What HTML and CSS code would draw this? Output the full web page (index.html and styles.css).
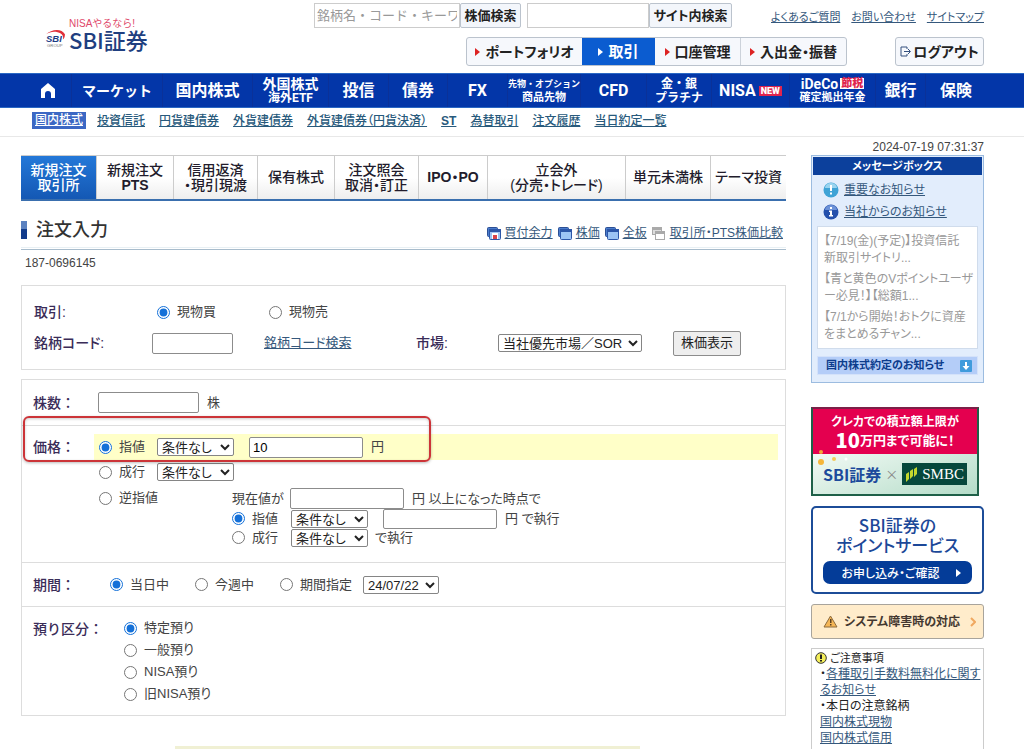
FILE: index.html
```html
<!DOCTYPE html>
<html lang="ja">
<head>
<meta charset="utf-8">
<title>注文入力 | SBI証券</title>
<link rel="stylesheet" href="styles.css">
</head>
<body>
<svg class="defs" aria-hidden="true">
  <symbol id="window" viewBox="0 0 14 13">
    <rect x="0.5" y="0.5" width="10" height="9" rx="1" fill="#4a7ccc" stroke="#2c4f94"/>
    <rect x="2.5" y="2.5" width="11" height="10" rx="1" fill="#9cc4f4" stroke="#2c56a8"/>
    <rect x="2" y="2" width="12" height="3" fill="#2c56a8"/>
  </symbol>
</svg>
<header class="header">
  <a class="logo" href="#">
    <svg class="emblem" viewBox="0 0 20 18" aria-hidden="true">
      <path d="M1 5C6 0 16-1 19 5c0 3-1 4-2 5 1-4-1-6-5-7C8 2 4 3 1 5z" fill="#e0303a"/>
      <text class="emblem-name" x="1" y="12">SBI</text>
      <text class="emblem-group" x="2" y="17">GROUP</text>
    </svg>
    <span class="logo-text"><span class="logo-tag">NISAやるなら!</span><span class="logo-name">SBI証券</span></span>
  </a>
  <div class="tools">
    <div class="tool-row">
      <form class="search"><input class="search-code" type="text" placeholder="銘柄名・コード・キーワード" aria-label="銘柄名・コード・キーワード"><button class="btn" type="button">株価検索</button></form>
      <form class="search"><input class="search-site" type="text" aria-label="サイト内検索"><button class="btn btn-wide" type="button">サイト内検索</button></form>
      <div class="help"><a href="#">よくあるご質問</a><a href="#">お問い合わせ</a><a href="#">サイトマップ</a></div>
    </div>
    <div class="tool-row">
      <div class="menu">
        <a class="menu-item menu-portfolio" href="#"><i class="tri"></i>ポートフォリオ</a>
        <a class="menu-item menu-trade" href="#"><i class="tri"></i>取引</a>
        <a class="menu-item menu-account" href="#"><i class="tri"></i>口座管理</a>
        <a class="menu-item menu-cash" href="#"><i class="tri"></i>入出金・振替</a>
      </div>
      <button class="logout" type="button">
        <svg width="11" height="11" viewBox="0 0 11 11" fill="none" stroke="#34507e" aria-hidden="true"><path d="M7 3V1H1v9h6V8M4 5.500h6M8 3l2.500 2.500L8 8"/></svg>ログアウト
      </button>
    </div>
  </div>
</header>
<nav class="nav">
  <a href="#" aria-label="ホーム"><svg width="16" height="15" viewBox="0 0 16 15" aria-hidden="true"><path d="M8 0l7 6v9h-4v-4a3 3 0 0 0-6 0v4H1V6z" fill="#fff"/></svg></a>
  <a class="mid" href="#">マーケット</a>
  <a href="#">国内株式</a>
  <a class="two" href="#"><span class="mid">外国株式</span><span>海外ETF</span></a>
  <a href="#">投信</a>
  <a href="#">債券</a>
  <a href="#">FX</a>
  <a class="two small" href="#"><span class="options">先物・オプション</span><span>商品先物</span></a>
  <a href="#">CFD</a>
  <a class="two" href="#"><span>金・銀</span><span>プラチナ</span></a>
  <a class="nisa" href="#">NISA<b class="new">NEW</b></a>
  <a class="two small" href="#"><span class="ideco">iDeCo<b class="tax">節税</b></span><span>確定拠出年金</span></a>
  <a href="#">銀行</a>
  <a href="#">保険</a>
</nav>
<nav class="subnav">
  <a class="current" href="#">国内株式</a><a href="#">投資信託</a><a href="#">円貨建債券</a><a href="#">外貨建債券</a><a href="#">外貨建債券（円貨決済）</a><a href="#">ST</a><a href="#">為替取引</a><a href="#">注文履歴</a><a href="#">当日約定一覧</a>
</nav>
<div class="page">
  <main class="main">
    <nav class="tabs">
      <a class="on" href="#">新規注文<br>取引所</a>
      <a href="#"><span>新規注文<br><b>PTS</b></span></a>
      <a href="#">信用返済<br>・現引現渡</a>
      <a href="#">保有株式</a>
      <a href="#">注文照会<br>取消・訂正</a>
      <a href="#">IPO・PO</a>
      <a href="#">立会外<br>(分売・トレード)</a>
      <a href="#">単元未満株</a>
      <a href="#">テーマ投資</a>
    </nav>
    <div class="title">
      <h1>注文入力</h1>
      <div class="title-links">
        <a href="#"><svg width="14" height="13" aria-hidden="true"><use href="#window"/><path d="M5 6h6v6H5z" fill="#fff"/><path d="M6 8h4v4H6z" fill="#d8434a"/></svg><span>買付余力</span></a>
        <a href="#"><svg width="14" height="13" aria-hidden="true"><use href="#window"/></svg><span>株価</span></a>
        <a href="#"><svg width="14" height="13" aria-hidden="true"><use href="#window"/></svg><span>全板</span></a>
        <a href="#"><svg width="14" height="13" viewBox="0 0 14 13" aria-hidden="true"><rect x="0.500" y="0.500" width="9" height="7" fill="#ddd" stroke="#aaa"/><path d="M0 0h10v3H0z" fill="#aaa"/><rect x="3.500" y="4.500" width="9" height="8" fill="#fff" stroke="#aaa"/><path d="M3 4h10v3H3z" fill="#aaa"/></svg><span>取引所・PTS株価比較</span></a>
      </div>
    </div>
    <p class="account">187-0696145</p>
    <form>
      <section class="box trade">
        <span class="label">取引:</span>
        <label class="choice"><input type="radio" name="side" checked>現物買</label>
        <label class="choice choice-sell"><input type="radio" name="side">現物売</label>
        <label class="label line2" for="code">銘柄コード:</label>
        <input class="text code" id="code" type="text">
        <a class="code-link" href="#">銘柄コード検索</a>
        <label class="label" for="market">市場:</label>
        <select id="market" class="market"><option>当社優先市場／SOR</option></select>
        <button class="quote" type="button">株価表示</button>
      </section>
      <section class="box order">
        <div class="row row-qty">
          <label class="label" for="qty">株数：</label>
          <div class="field qty"><input class="text qty-input" id="qty" type="text"><span>株</span></div>
        </div>
        <div class="row row-price">
          <span class="label">価格：</span>
          <div class="prices">
            <div class="price limit"><label class="choice"><input type="radio" name="price" checked>指値</label><select aria-label="指値条件"><option>条件なし</option></select><input class="text amount" type="text" value="10" aria-label="指値価格"><span>円</span></div>
            <div class="price"><label class="choice"><input type="radio" name="price">成行</label><select aria-label="成行条件"><option>条件なし</option></select></div>
            <div class="price stop">
              <label class="choice"><input type="radio" name="price">逆指値</label>
              <div class="stop-body">
                <div class="trigger"><label for="trigger">現在値が</label><input class="text amount" id="trigger" type="text"><span>円 以上になった時点で</span></div>
                <div class="exec"><label class="choice"><input type="radio" name="exec" checked>指値</label><select aria-label="逆指値条件"><option>条件なし</option></select><input class="text amount" type="text" aria-label="執行価格"><span>円 で執行</span></div>
                <div class="exec"><label class="choice"><input type="radio" name="exec">成行</label><select aria-label="逆指値成行条件"><option>条件なし</option></select><span>で執行</span></div>
              </div>
            </div>
          </div>
          <div class="highlight"></div>
        </div>
        <div class="row row-term">
          <span class="label">期間：</span>
          <div class="field terms">
            <label class="choice"><input type="radio" name="term" checked>当日中</label>
            <label class="choice"><input type="radio" name="term">今週中</label>
            <label class="choice"><input type="radio" name="term">期間指定</label>
            <select class="date" aria-label="期間指定日"><option>24/07/22</option></select>
          </div>
        </div>
        <div class="row row-deposit">
          <span class="label">預り区分：</span>
          <div class="deposits">
            <label class="choice"><input type="radio" name="deposit" checked>特定預り</label>
            <label class="choice"><input type="radio" name="deposit">一般預り</label>
            <label class="choice"><input type="radio" name="deposit">NISA預り</label>
            <label class="choice"><input type="radio" name="deposit">旧NISA預り</label>
          </div>
        </div>
      </section>
    </form>
    <div class="confirm"></div>
  </main>
  <aside class="side">
    <time class="clock">2024-07-19 07:31:37</time>
    <section class="messages">
      <h2>メッセージボックス</h2>
      <a class="message" href="#"><svg width="16" height="16" viewBox="0 0 16 16" aria-hidden="true"><circle cx="8" cy="8" r="7.500" fill="#3fa3d6"/><path d="M2 6a6 5 0 0 1 12 0z" fill="#9ad4ef"/><path d="M7 3h2v6H7zM7 10.500h2v2H7z" fill="#fff"/></svg><span>重要なお知らせ</span></a>
      <a class="message" href="#"><svg width="16" height="16" viewBox="0 0 16 16" aria-hidden="true"><circle cx="8" cy="8" r="7.500" fill="#2450ac"/><path d="M2 6a6 5 0 0 1 12 0z" fill="#6c92d8"/><path d="M7 3h2v2H7zM6 6.500h3V11h1v1.500H6V11h1V8H6z" fill="#fff"/></svg><span>当社からのお知らせ</span></a>
      <div class="news">
        <p>【7/19(金)(予定)】投資信託<br>新取引サイトリ...</p>
        <p>【青と黄色のVポイントユーザ<br>ー必見！】【総額1...</p>
        <p>【7/1から開始！おトクに資産<br>をまとめるチャン...</p>
      </div>
      <a class="fills" href="#">国内株式約定のお知らせ<svg width="12" height="12" viewBox="0 0 12 12" aria-hidden="true"><rect width="12" height="12" rx="1" fill="#3f9bdc"/><path d="M5 2h2v4h2.500L6 10 2.500 6H5z" fill="#fff"/></svg></a>
    </section>
    <a class="card" href="#">
      <span class="card-top"><span>クレカでの積立額上限が</span><span class="card-big"><b>10</b>万円まで可能に！</span></span>
      <span class="card-bottom">
        <svg class="coins" width="40" height="16" viewBox="0 0 40 16" aria-hidden="true"><circle cx="8" cy="3" r="2" fill="#f4a938"/><circle cx="8" cy="13" r="3" fill="#f6b63a"/><circle cx="21" cy="10" r="2" fill="#f3ca5a"/><circle cx="33" cy="10" r="1.500" fill="#fff"/></svg>
        <span class="card-sbi">SBI証券</span><span class="times">×</span><span class="smbc"><svg width="13" height="15" viewBox="0 0 13 15" aria-hidden="true"><path d="M1 7l3-2v7l-3 3zM5 4l3-2v7l-3 3zM9 2l3-2v7L9 10z" fill="#c4d82e"/></svg>SMBC</span>
      </span>
    </a>
    <a class="points" href="#"><span>SBI証券の</span><span>ポイントサービス</span><span class="points-btn">お申し込み・ご確認<i class="tri"></i></span></a>
    <a class="outage" href="#"><svg width="15" height="13" viewBox="0 0 15 13" aria-hidden="true"><path d="M7.500 1L14 12H1z" fill="#f5b656" stroke="#8c6a3c" stroke-linejoin="round"/><path d="M7 4h1.500v4H7zM7 9h1.500v1.500H7z" fill="#5a4020"/></svg><span>システム障害時の対応</span><svg width="6" height="10" viewBox="0 0 6 10" fill="none" stroke="#f0a860" stroke-width="2" aria-hidden="true"><path d="M1 1l4 4-4 4"/></svg></a>
    <section class="notice">
      <h2><svg width="12" height="12" viewBox="0 0 12 12" aria-hidden="true"><circle cx="6" cy="6" r="5.300" fill="#f4ee5a" stroke="#333"/><path d="M5 2.500h2V7H5zM5 8h2v1.500H5z" fill="#222"/></svg>ご注意事項</h2>
      <p>・<a href="#">各種取引手数料無料化に関するお知らせ</a></p>
      <p>・本日の注意銘柄</p>
      <p><a href="#">国内株式現物</a></p>
      <p><a href="#">国内株式信用</a></p>
    </section>
  </aside>
</div>
</body>
</html>
```
FILE: styles.css
```css
* { box-sizing: border-box; }
html, body { height: 100%; }
body {
  margin: 0;
  overflow: hidden;
  background: #fff;
  color: #444;
  font-family: "Liberation Sans", "Noto Sans CJK JP", sans-serif;
  font-size: 13px;
  line-height: 16px;
  font-feature-settings: "palt";
}
a { color: #35587c; }
h1, h2, p { margin: 0; }
input, select, button { font: inherit; font-feature-settings: inherit; margin: 0; }
.defs { display: none; }
svg { flex: none; }

.header { display: flex; justify-content: space-between; padding: 3px 40px 7px 45px; }
.logo { display: flex; align-items: flex-start; gap: 3px; padding-top: 17px; color: #1f3f80; text-decoration: none; }
.emblem { width: 21px; height: 19px; margin-top: 9px; }
.emblem-name { font: italic bold 9px "Liberation Sans", sans-serif; fill: #1c3c84; }
.emblem-group { font: 4px "Liberation Sans", sans-serif; fill: #777; }
.logo-text { display: flex; flex-direction: column; }
.logo-tag { color: #e0476a; font-size: 10px; line-height: 8px; font-feature-settings: normal; }
.logo-name { font-family: "Noto Sans CJK JP", sans-serif; font-size: 22px; font-weight: 500; line-height: 22px; }
.tools { display: flex; flex-direction: column; gap: 9px; }
.tool-row { display: flex; justify-content: flex-end; }
.search { display: flex; margin-right: 6px; }
.search input { height: 25px; border: 1px solid #ccc; padding: 0 2px; font-feature-settings: normal; }
.search input::placeholder { color: #999; }
.search-code { width: 146px; }
.search-site { width: 122px; }
.btn { width: 61px; height: 25px; padding: 0; border: 1px solid #bbc3cd; border-radius: 2px; background: #f3f6fb; color: #222; font-weight: bold; }
.btn-wide { width: 83px; }
.help { display: flex; justify-content: space-between; width: 213px; margin-left: 33px; padding-top: 6px; font-size: 11px; }
.menu { display: flex; margin-right: 48px; border: 1px solid #bbc3cd; border-radius: 3px; background: #f6f8fc; }
.menu-item { display: flex; align-items: center; justify-content: center; gap: 5px; height: 27px; color: #222; font-size: 14px; font-weight: bold; text-decoration: none; }
.menu-portfolio { width: 115px; }
.menu-trade { width: 73px; background: #0b5cd0; color: #fff; font-size: 15px; }
.menu-account { width: 85px; }
.menu-cash { width: 106px; border-left: 1px solid #ccd2da; }
.tri { border: 4px solid transparent; border-left: 5px solid #d22; border-right: 0; }
.menu-trade .tri, .points .tri { border-left-color: #fff; }
.logout { display: flex; align-items: center; justify-content: center; gap: 2px; width: 89px; height: 29px; padding: 0; border: 1px solid #bbc3cd; border-radius: 3px; background: #f6f8fc; color: #222; font-size: 14px; font-weight: bold; }

.nav { display: grid; grid-template-columns: 48fr 91fr 90fr 76fr 60fr 59fr 60fr 73fr 66fr 65fr 78fr 86fr 50fr 60fr; height: 35px; padding: 0 38px 0 24px; border-top: 1px solid #2a68c4; border-bottom: 1px solid #2a68c4; background: #0336a8; }
.nav > a { display: flex; align-items: center; justify-content: center; min-width: 0; border-right: 1px solid #0a3198; color: #fff; font: bold 16px/16px Roboto, "Noto Sans CJK JP", sans-serif; text-decoration: none; white-space: nowrap; }
.nav > a:last-child { border-right: 0; }
.nav > a.mid, .nav .mid { font-size: 14px; }
.nav > .two { flex-direction: column; font-size: 12px; line-height: 14px; }
.nav > .small { font-size: 11px; }
.nav .options { font-size: 9px; }
.nav .ideco { display: flex; align-items: center; gap: 2px; font-size: 14px; }
.new { margin-left: 3px; padding: 0 2px; background: #e0244e; font-size: 9px; line-height: 10px; }
.tax { padding: 0 1px; background: #fff; color: #e0244e; font-size: 11px; line-height: 11px; }
.subnav { display: flex; align-items: center; gap: 14px; height: 29px; padding: 0 32px 3px; border-bottom: 1px solid #e8e8e8; font-size: 12px; font-weight: 500; }
.subnav a { color: #285a7c; white-space: nowrap; }
.subnav .current { margin-right: -3px; padding: 0 3px; background: #3c68c4; color: #fff; line-height: 17px; }
.subnav a:nth-child(6) { font-weight: bold; }

.page { display: flex; align-items: flex-start; gap: 25px; padding: 0 40px 0 21px; }
.main { flex: 1; min-width: 0; padding-top: 18px; }
.side { width: 173px; }
.tabs { display: grid; grid-template-columns: 76fr 77fr 84fr 77fr 84fr 69fr 138fr 85fr 75fr; height: 46px; border-top: 1px solid #ccc; border-bottom: 2px solid #3a6fae; background: linear-gradient(#fff 50%, #eee); }
.tabs a { display: flex; align-items: center; justify-content: center; border-right: 1px solid #ccc; color: #221c2c; font-size: 14px; font-weight: 500; line-height: 15px; text-align: center; text-decoration: none; white-space: nowrap; }
.tabs a:last-child { border-right: 0; }
.tabs a:nth-child(6) { font-weight: bold; }
.tabs .on { background: linear-gradient(#2478d8, #1458b4); color: #fff; }
.title { display: flex; align-items: center; justify-content: space-between; height: 49px; padding: 10px 3px 0 0; border-bottom: 1px solid #a8bccc; background: linear-gradient(#e8f0f4, #e8f0f4) 0 46px / 100% 1px no-repeat; }
.title h1 { display: flex; align-items: center; gap: 9px; color: #333; font-size: 18px; font-weight: 500; line-height: 20px; }
.title h1::before { content: ""; width: 6px; height: 18px; background: linear-gradient(#5c82c0 45%, #123c8c 45%); }
.title-links { display: flex; gap: 5px; padding-top: 6px; font-size: 12px; }
.title-links a { display: flex; align-items: center; gap: 4px; text-decoration: none; }
.title-links span { text-decoration: underline; }
.account { padding: 5px 4px 0; font-size: 12px; }

.box { border: 1px solid #ddd; }
.label { color: #3a2c58; font-size: 14px; font-weight: 500; }
.choice { display: flex; align-items: center; gap: 7px; white-space: nowrap; }
input[type="radio"] { flex: none; width: 13px; height: 13px; accent-color: #1470d8; }
.text { height: 21px; border: 1px solid #8c8c8c; border-radius: 2px; padding: 0 3px; background: #fff; }
select { height: 18px; width: 77px; padding: 0; border: 1px solid #858585; border-radius: 2px; background: #fff; color: #222; line-height: 16px; }
.trade { display: grid; grid-template-columns: 118px 112px 152px 82px 175px auto; grid-template-rows: 28px 28px; row-gap: 3px; align-items: center; justify-content: start; margin-top: 14px; padding: 12px; }
.trade .choice { padding-left: 5px; }
.trade .line2 { grid-column: 1; }
.code { width: 81px; }
.market { width: 144px; }
.quote { width: 68px; height: 25px; padding: 0; border: 1px solid #8c8c8c; border-radius: 2px; background: #eee; color: #222; }
.order { margin-top: 9px; }
.row { position: relative; display: flex; border-bottom: 1px solid #ddd; }
.row:last-child { border-bottom: 0; }
.row .label { flex: none; width: 72px; padding-left: 11px; white-space: nowrap; font-feature-settings: normal; }
.field { display: flex; align-items: center; }
.row-qty, .row-term { align-items: center; height: 46px; }
.qty { gap: 8px; padding-left: 4px; }
.qty-input { width: 101px; }
.row-price { height: 137px; padding: 8px 7px 0 0; }
.row-price > .label { padding-top: 5px; }
.prices { flex: 1; }
.price { display: flex; align-items: center; height: 24px; padding-left: 5px; }
.limit { height: 26px; background: #ffffc8; }
.price > select { margin-left: 12px; }
.limit .amount { margin-left: 15px; }
.amount { width: 114px; }
.amount + span { margin-left: 8px; }
.stop { align-items: flex-start; height: auto; padding-top: 4px; }
.stop > .choice { width: 133px; padding-top: 2px; }
.trigger, .exec { display: flex; align-items: center; }
.trigger label { width: 58px; }
.exec { height: 19px; }
.exec .choice { width: 59px; }
.exec .amount { height: 20px; margin-left: 15px; }
.exec select + span { margin-left: 7px; }
.highlight { position: absolute; left: 1px; top: -10px; width: 408px; height: 46px; border: 2px solid #cc3438; border-radius: 6px; box-shadow: 0 1px 3px #0004, inset 0 1px 3px #0003; pointer-events: none; }
.row-term { height: 44px; }
.terms { padding-left: 16px; }
.terms .choice { margin-right: 26px; }
.terms .choice:nth-child(3) { margin-right: 11px; }
.date { width: 76px; }
.row-deposit { height: 108px; padding-top: 10px; }
.row-deposit > .label { padding-top: 4px; }
.deposits { display: flex; flex-direction: column; padding-left: 30px; }
.deposits .choice { height: 22px; }
.confirm { width: 465px; height: 24px; margin: 30px 0 0 154px; background: #f0f0d4; }

.side a { text-decoration: none; }
.clock { display: block; padding-top: 2px; font-size: 12px; text-align: right; white-space: nowrap; }
.messages { height: 228px; border: 1px solid #9cbce0; padding: 1px; background: #e2edfc; }
.messages h2 { margin-bottom: 4px; background: #0c409c; color: #fff; font-size: 11px; line-height: 18px; text-align: center; }
.message { display: flex; align-items: center; gap: 5px; height: 22px; padding-left: 10px; }
.message span { text-decoration: underline; font-size: 12px; }
.news { height: 123px; margin: 3px 4px 7px; padding: 6px 6px 0; border: 1px solid #d0dcec; background: #fff; color: #999; font-size: 12px; line-height: 17px; white-space: nowrap; }
.news p { margin-bottom: 4px; }
.fills { display: flex; align-items: center; justify-content: space-between; margin: 0 4px; padding: 0 5px 0 8px; border: 1px solid #d4e2fa; background: #b4cdf8; color: #0c3c8c; font-size: 11px; font-weight: bold; line-height: 17px; white-space: nowrap; }
.card { display: flex; flex-direction: column; width: 168px; height: 89px; margin-top: 24px; border: 2px solid #1e6048; border-top-color: #7c2048; font-family: "Noto Sans CJK JP", sans-serif; }
.card-top { display: flex; flex-direction: column; align-items: center; height: 45px; padding-top: 3px; background: #e4004f; color: #fff; font-size: 12px; font-weight: bold; line-height: 17px; white-space: nowrap; }
.card-big { display: flex; align-items: center; font-size: 13px; line-height: 21px; }
.card-big b { font-size: 20px; }
.card-bottom { position: relative; display: flex; flex: 1; align-items: center; justify-content: center; gap: 4px; background: linear-gradient(160deg, #f2faf5, #b4dcc8); }
.coins { position: absolute; left: 0; top: -5px; }
.card-sbi { color: #1c4a9c; font-size: 16px; font-weight: bold; }
.times { color: #888; }
.smbc { display: flex; align-items: center; gap: 4px; height: 22px; padding: 0 3px; background: #06483c; color: #fff; font: 15px "Liberation Serif", serif; }
.points { display: flex; flex-direction: column; align-items: center; height: 88px; margin-top: 10px; padding-top: 7px; border: 2px solid #1c4c98; border-radius: 5px; color: #1c4898; font-family: "Noto Sans CJK JP", sans-serif; font-size: 17px; font-weight: 500; line-height: 20px; }
.points-btn { display: flex; align-items: center; justify-content: center; gap: 17px; align-self: stretch; height: 23px; margin: 6px 10px 0; padding-left: 8px; border-radius: 7px; background: #043c98; color: #fff; font-size: 12px; }
.outage { display: flex; align-items: center; gap: 6px; height: 35px; margin-top: 10px; padding: 0 7px 0 11px; border: 1px solid #a8a49c; border-radius: 3px; background: #ffeccb; color: #443830; font-size: 12px; font-weight: bold; white-space: nowrap; }
.outage span { flex: 1; }
.notice { height: 120px; margin-top: 9px; padding: 1px 0 0 3px; border: 1px solid #ccc; color: #222; font-size: 12px; }
.notice h2 { display: flex; align-items: center; gap: 3px; font-size: 11px; font-weight: 400; }
.notice p { padding-left: 5px; }
.notice a { text-decoration: underline; }
```
